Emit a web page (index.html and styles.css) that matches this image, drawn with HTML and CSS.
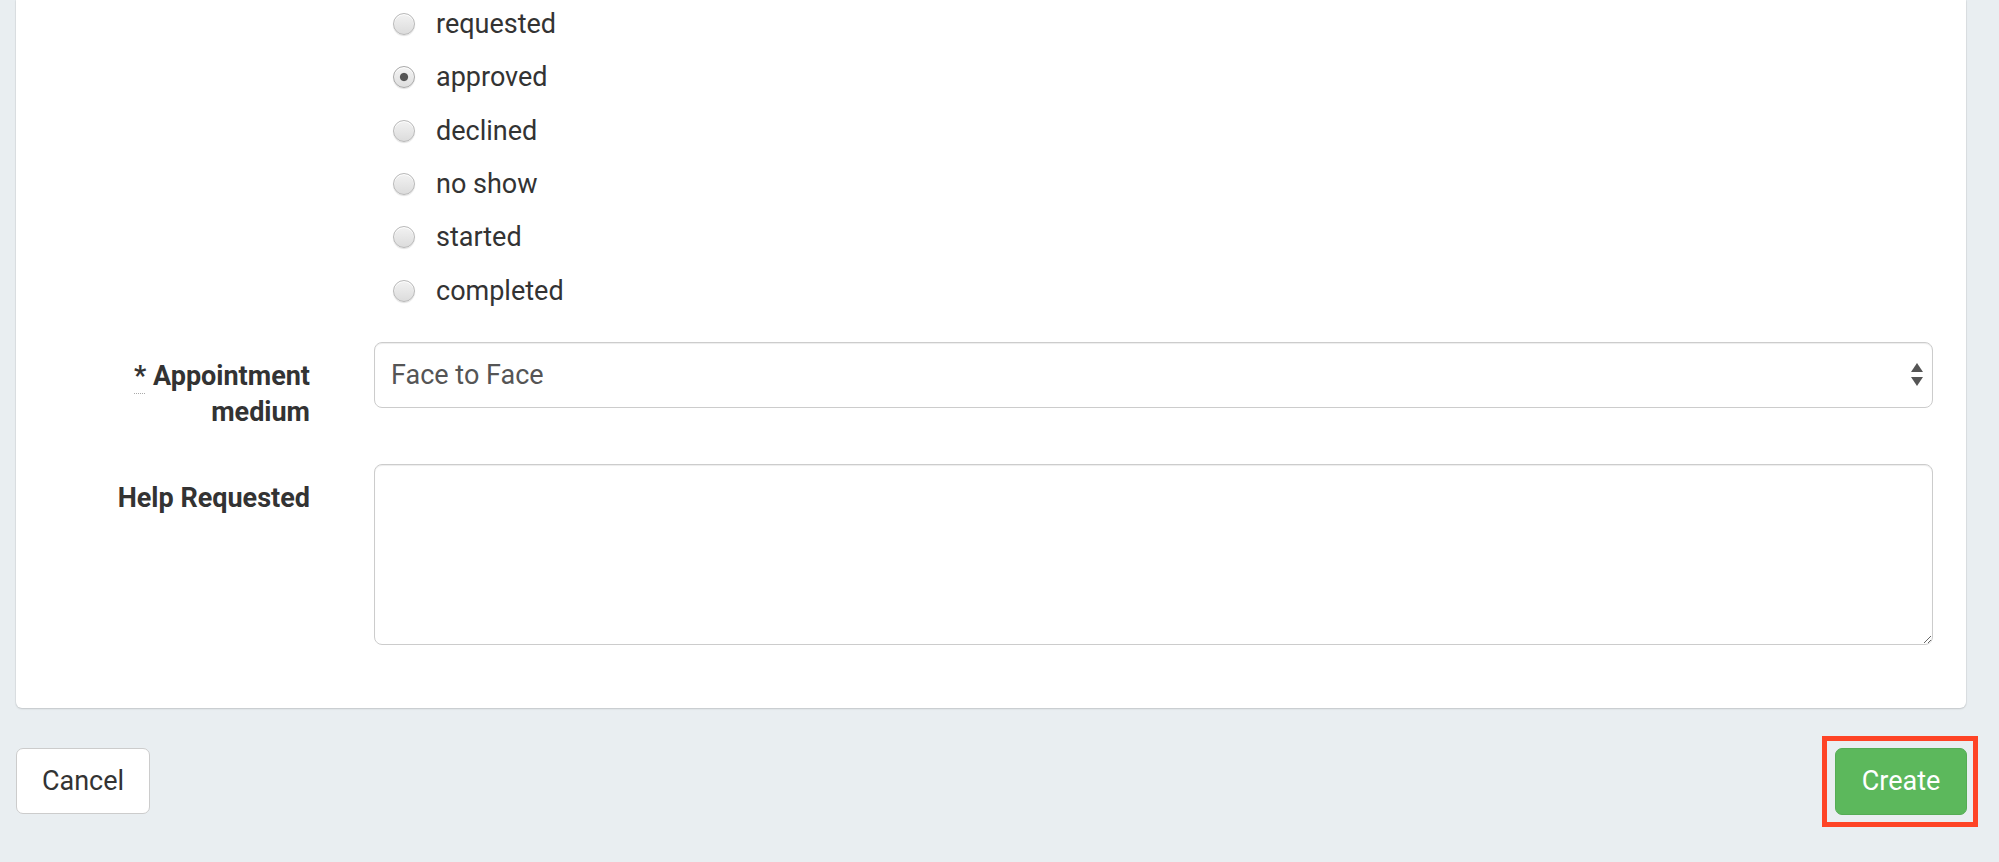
FILE: index.html
```html
<!DOCTYPE html>
<html lang="en">
<head>
<meta charset="utf-8">
<title>New Appointment</title>
<link rel="stylesheet" href="styles.css">
</head>
<body>
<div class="page">
  <div class="card">
    <form class="form">
      <div class="form-row status-row">
        <div class="label-col"></div>
        <div class="field-col radio-list">
          <label class="radio"><input type="radio" name="status" value="requested"><span>requested</span></label>
          <label class="radio"><input type="radio" name="status" value="approved" checked><span>approved</span></label>
          <label class="radio"><input type="radio" name="status" value="declined"><span>declined</span></label>
          <label class="radio"><input type="radio" name="status" value="no_show"><span>no show</span></label>
          <label class="radio"><input type="radio" name="status" value="started"><span>started</span></label>
          <label class="radio"><input type="radio" name="status" value="completed"><span>completed</span></label>
        </div>
      </div>

      <div class="form-row medium-row">
        <label class="label-col control-label" for="medium"><abbr title="required">*</abbr> Appointment medium</label>
        <div class="field-col">
          <div class="select-wrap">
            <select id="medium" class="form-control select">
              <option>Face to Face</option>
              <option>Phone</option>
              <option>Video</option>
            </select>
            <svg class="select-arrows" width="12" height="23" viewBox="0 0 12 23" aria-hidden="true">
              <path d="M6 0 L12 9 L0 9 Z" fill="#555"/>
              <path d="M0 14 L12 14 L6 23 Z" fill="#555"/>
            </svg>
          </div>
        </div>
      </div>

      <div class="form-row help-row">
        <label class="label-col control-label" for="help">Help Requested</label>
        <div class="field-col">
          <textarea id="help" class="form-control textarea"></textarea>
        </div>
      </div>
    </form>
  </div>

  <div class="actions">
    <button type="button" class="btn btn-default">Cancel</button>
    <div class="highlight">
      <button type="submit" class="btn btn-success">Create</button>
    </div>
  </div>
</div>
</body>
</html>
```

FILE: styles.css
```css
* { box-sizing: border-box; }

html, body {
  margin: 0;
  padding: 0;
  background: #e9eef1;
  font-family: Roboto, "Liberation Sans", Arial, sans-serif;
  font-size: 27px;
  color: #333;
}

.page {
  padding: 0 33px 0 16px;
}

.card {
  background: #fff;
  border-radius: 0 0 6px 6px;
  box-shadow: 0 1px 2px rgba(0, 0, 0, 0.14), 0 0 0 1px rgba(0, 0, 0, 0.03);
  padding: 8px 33px 63px 0;
}

.form-row {
  display: grid;
  grid-template-columns: 294px 1fr;
  column-gap: 64px;
}

.status-row { margin-bottom: 35px; }
.medium-row { margin-bottom: 34px; }

.control-label {
  text-align: right;
  font-weight: 700;
  line-height: 36px;
  padding: 16px 0 0 80px;
  color: #333;
}

.control-label abbr {
  text-decoration: underline dotted #aaa;
  text-decoration-thickness: 1px;
  text-underline-offset: 8px;
  cursor: help;
}

.radio-list {
  display: flex;
  flex-direction: column;
  gap: 21.33px;
}

.radio {
  display: flex;
  align-items: center;
  height: 32px;
  line-height: 32px;
  padding-left: 19px;
  cursor: pointer;
}

.radio input {
  appearance: none;
  -webkit-appearance: none;
  margin: 0 21px 0 0;
  width: 22px;
  height: 22px;
  border-radius: 50%;
  border: 1px solid #b9b9b9;
  background: linear-gradient(#f2f2f2, #dcdcdc);
  box-shadow: 0 1px 1px rgba(0, 0, 0, 0.12), inset 0 1px 0 #fff;
  flex: none;
}

.radio input:checked {
  background: radial-gradient(circle, #555 0, #555 3.6px, transparent 4.6px), linear-gradient(#f4f4f4, #dedede);
  border-color: #a9a9a9;
}

.radio span {
  color: #333;
}

.form-control {
  display: block;
  width: 100%;
  border: 1px solid #ccc;
  border-radius: 8px;
  background: #fff;
  box-shadow: inset 0 1px 1px rgba(0, 0, 0, 0.075);
  font-family: inherit;
  font-size: 27px;
  color: #555;
  outline: none;
}

.select-wrap {
  position: relative;
}

.select {
  appearance: none;
  -webkit-appearance: none;
  height: 66px;
  padding: 0 40px 0 16px;
}

.select-arrows {
  position: absolute;
  right: 10px;
  top: 21px;
  pointer-events: none;
}

.textarea {
  height: 181px;
  padding: 12px 16px;
  resize: vertical;
}

.actions {
  display: flex;
  justify-content: space-between;
  align-items: center;
  margin-top: 28px;
}

.btn {
  font-family: inherit;
  font-size: 27px;
  line-height: 36px;
  height: 66px;
  border-radius: 7px;
  border: 1px solid #ccc;
  cursor: pointer;
  padding: 0;
}

.btn-default {
  width: 134px;
  background: #fff;
  color: #333;
}

.btn-success {
  display: block;
  width: 132px;
  height: 67px;
  background: #5cb85c;
  border-color: #55ad55;
  color: #fff;
}

.highlight {
  border: 5px solid #fe4426;
  padding: 7px 6px 7px 8px;
  margin-right: -12px;
}
```
